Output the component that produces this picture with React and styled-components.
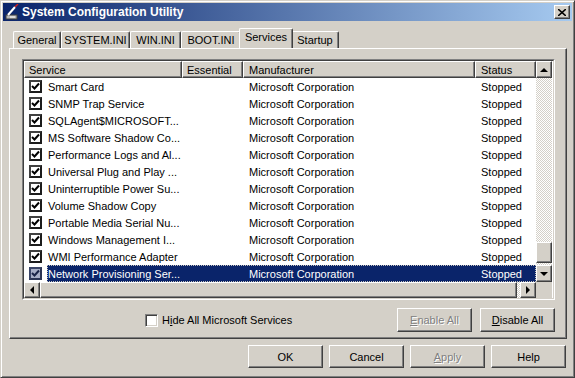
import React from 'react';
import styled, { createGlobalStyle, css } from 'styled-components';

const GlobalStyle = createGlobalStyle`
  html, body {
    margin: 0;
    padding: 0;
    background: #d4d0c8;
  }
  body {
    font-family: "Liberation Sans", Arial, sans-serif;
    font-size: 11px;
    color: #000;
  }
`;

const raised = css`
  border: 1px solid;
  border-color: #fff #404040 #404040 #fff;
  box-shadow: inset -1px -1px 0 #808080;
`;

const Window = styled.div`
  width: 575px;
  height: 378px;
  box-sizing: border-box;
  background: #d4d0c8;
  border: 1px solid;
  border-color: #d4d0c8 #404040 #404040 #d4d0c8;
  box-shadow: inset 1px 1px 0 #fff, inset -1px -1px 0 #808080;
  padding: 2px;
  display: flex;
  flex-direction: column;
`;

const TitleBar = styled.div`
  height: 18px;
  display: flex;
  align-items: center;
  gap: 2px;
  padding: 0 2px 0 1px;
  background: linear-gradient(to right, #0a246a, #a6caf0);
  color: #fff;
  font-weight: bold;
  font-size: 12px;
`;

const TitleText = styled.span`
  flex: 1;
  white-space: nowrap;
`;

const CloseButton = styled.div`
  ${raised};
  width: 16px;
  height: 14px;
  box-sizing: border-box;
  background: #d4d0c8;
  display: flex;
  align-items: center;
  justify-content: center;
`;

const Content = styled.div`
  display: flex;
  flex-direction: column;
  padding: 7px 5px 0 6px;
`;

const TabStrip = styled.div`
  display: flex;
  align-items: flex-end;
  height: 20px;
  padding-left: 4px;
`;

const Tab = styled.div`
  position: relative;
  box-sizing: border-box;
  width: ${p => p.$w}px;
  height: ${p => (p.$active ? 20 : 17)}px;
  margin: 0 ${p => (p.$active ? -2 : 0)}px;
  z-index: ${p => (p.$active ? 2 : 0)};
  background: #d4d0c8;
  border: 1px solid;
  border-bottom: none;
  border-color: #fff #404040 #fff #fff;
  border-radius: 2px 2px 0 0;
  box-shadow: inset -1px 0 0 #808080;
  display: flex;
  align-items: center;
  justify-content: center;
  padding-bottom: ${p => (p.$active ? 3 : 0)}px;
  white-space: nowrap;
`;

const Panel = styled.div`
  position: relative;
  z-index: 1;
  box-sizing: border-box;
  height: 291px;
  border: 1px solid;
  border-color: #fff #404040 #404040 #fff;
  box-shadow: inset -1px -1px 0 #808080;
  padding: 10px 11px 0 12px;
  display: flex;
  flex-direction: column;
`;

const ListFrame = styled.div`
  border: 1px solid;
  border-color: #808080 #fff #fff #808080;
`;

const ListInner = styled.div`
  border: 1px solid;
  border-color: #404040 #d4d0c8 #d4d0c8 #404040;
  background: #fff;
  display: grid;
  grid-template-columns: 512px 16px;
  grid-template-rows: 221px 16px;
`;

const Table = styled.div`
  display: flex;
  flex-direction: column;
  overflow: hidden;
`;

const HeaderRow = styled.div`
  display: flex;
  height: 17px;
`;

const HeaderCell = styled.div`
  ${raised};
  box-sizing: border-box;
  width: ${p => p.$w}px;
  background: #d4d0c8;
  padding-left: ${p => p.$pad}px;
  display: flex;
  align-items: center;
  white-space: nowrap;
  overflow: hidden;
`;

const Row = styled.div`
  display: flex;
  height: 17px;
  align-items: center;
`;

const CheckCell = styled.div`
  width: 23px;
  height: 17px;
  box-sizing: border-box;
  padding-left: 5px;
  display: flex;
  align-items: center;
`;

const ListCheck = styled.div`
  width: 13px;
  height: 13px;
  box-sizing: border-box;
  border: 2px solid;
  border-color: ${p => (p.$sel ? '#3a4568 #2a3454 #2a3454 #3a4568' : '#404040 #1c1c1c #1c1c1c #404040')};
  background: ${p => (p.$sel ? '#a7aec6' : '#fff')};
  display: flex;
  align-items: center;
  justify-content: center;
`;

const RowBody = styled.div`
  display: flex;
  height: 17px;
  box-sizing: border-box;
  align-items: center;
  background: ${p => (p.$sel ? '#0a246a' : 'transparent')};
  color: ${p => (p.$sel ? '#fff' : '#000')};
  outline: ${p => (p.$sel ? '1px dotted #c8c4bc' : 'none')};
  outline-offset: -1px;
`;

const Cell = styled.div`
  width: ${p => p.$w}px;
  box-sizing: border-box;
  padding-left: ${p => p.$pad}px;
  white-space: nowrap;
  overflow: hidden;
`;

const VScroll = styled.div`
  display: flex;
  flex-direction: column;
`;

const HScroll = styled.div`
  display: flex;
`;

const ScrollButton = styled.div`
  ${raised};
  box-sizing: border-box;
  width: ${p => (p.$vertical ? 16 : 16)}px;
  height: ${p => (p.$vertical ? 17 : 16)}px;
  flex: none;
  background: #d4d0c8;
  display: flex;
  align-items: center;
  justify-content: center;
`;

const Arrow = styled.div`
  width: 0;
  height: 0;
  ${p =>
    p.$dir === 'up' &&
    css`border-left: 4px solid transparent; border-right: 4px solid transparent; border-bottom: 4px solid #000;`}
  ${p =>
    p.$dir === 'down' &&
    css`border-left: 4px solid transparent; border-right: 4px solid transparent; border-top: 4px solid #000;`}
  ${p =>
    p.$dir === 'left' &&
    css`border-top: 4px solid transparent; border-bottom: 4px solid transparent; border-right: 4px solid #000;`}
  ${p =>
    p.$dir === 'right' &&
    css`border-top: 4px solid transparent; border-bottom: 4px solid transparent; border-left: 4px solid #000;`}
`;

const Track = styled.div`
  flex: ${p => (p.$size ? 'none' : 1)};
  ${p => (p.$vertical ? 'height' : 'width')}: ${p => (p.$size ? `${p.$size}px` : 'auto')};
  background: repeating-conic-gradient(#fff 0 25%, #d4d0c8 0 50%) 0 0 / 2px 2px;
`;

const Thumb = styled.div`
  ${raised};
  box-sizing: border-box;
  flex: ${p => (p.$size ? 'none' : 1)};
  ${p => (p.$vertical ? 'height' : 'width')}: ${p => (p.$size ? `${p.$size}px` : 'auto')};
  background: #d4d0c8;
`;

const Corner = styled.div`
  background: #d4d0c8;
`;

const OptionsRow = styled.div`
  display: flex;
  align-items: center;
  margin-top: 8px;
  height: 24px;
`;

const CheckLabel = styled.label`
  display: flex;
  align-items: center;
  gap: 4px;
  margin-left: 123px;
`;

const FormCheck = styled.span`
  width: 13px;
  height: 13px;
  box-sizing: border-box;
  background: #fff;
  border: 1px solid;
  border-color: #808080 #fff #fff #808080;
  box-shadow: inset 1px 1px 0 #404040, inset -1px -1px 0 #d4d0c8;
`;

const ButtonGroup = styled.div`
  display: flex;
  gap: ${p => p.$gap}px;
  margin-left: auto;
`;

const Button = styled.div`
  ${raised};
  box-sizing: border-box;
  width: 75px;
  height: ${p => p.$h || 23}px;
  background: #d4d0c8;
  display: flex;
  align-items: center;
  justify-content: center;
  color: ${p => (p.$disabled ? '#808080' : '#000')};
  text-shadow: ${p => (p.$disabled ? '1px 1px 0 #fff' : 'none')};
  white-space: nowrap;
`;

const DialogButtons = styled.div`
  display: flex;
  justify-content: flex-end;
  gap: 6px;
  margin-top: 6px;
  padding-right: 1px;
`;

const tabs = [
  { label: 'General', w: 48 },
  { label: 'SYSTEM.INI', w: 69 },
  { label: 'WIN.INI', w: 51 },
  { label: 'BOOT.INI', w: 60 },
  { label: 'Services', w: 54, active: true },
  { label: 'Startup', w: 48 },
];

const services = [
  'Smart Card',
  'SNMP Trap Service',
  'SQLAgent$MICROSOFT...',
  'MS Software Shadow Co...',
  'Performance Logs and Al...',
  'Universal Plug and Play ...',
  'Uninterruptible Power Su...',
  'Volume Shadow Copy',
  'Portable Media Serial Nu...',
  'Windows Management I...',
  'WMI Performance Adapter',
  'Network Provisioning Ser...',
];

const AppIcon = () => (
  <svg width="16" height="16" viewBox="0 0 16 16">
    <rect x="2" y="11" width="11" height="4" fill="#b8b8b8" stroke="#404040" strokeWidth="1" />
    <line x1="4" y1="11" x2="11" y2="3" stroke="#fff" strokeWidth="2" />
    <line x1="11" y1="3" x2="14" y2="0" stroke="#d02020" strokeWidth="1.5" />
    <line x1="6" y1="13" x2="11" y2="13" stroke="#fff" strokeWidth="1" />
  </svg>
);

const CloseGlyph = () => (
  <svg width="8" height="7" viewBox="0 0 8 7">
    <path d="M0 0 L8 7 M8 0 L0 7" stroke="#000" strokeWidth="1.6" />
  </svg>
);

const CheckMark = ({ color }) => (
  <svg width="9" height="9" viewBox="0 0 9 9">
    <path d="M1 4 L3.5 6.5 L8 1.5" fill="none" stroke={color} strokeWidth="2" />
  </svg>
);

const App = () => {
  return (
    <>
      <GlobalStyle />
      <Window>
        <TitleBar>
          <AppIcon />
          <TitleText>System Configuration Utility</TitleText>
          <CloseButton>
            <CloseGlyph />
          </CloseButton>
        </TitleBar>
        <Content>
          <TabStrip>
            {tabs.map(t => (
              <Tab key={t.label} $w={t.w} $active={t.active}>
                {t.label}
              </Tab>
            ))}
          </TabStrip>
          <Panel>
            <ListFrame>
              <ListInner>
                <Table>
                  <HeaderRow>
                    <HeaderCell $w={158} $pad={4}>Service</HeaderCell>
                    <HeaderCell $w={61} $pad={4}>Essential</HeaderCell>
                    <HeaderCell $w={232} $pad={5}>Manufacturer</HeaderCell>
                    <HeaderCell $w={61} $pad={5}>Status</HeaderCell>
                  </HeaderRow>
                  {services.map((name, i) => {
                    const sel = i === services.length - 1;
                    return (
                      <Row key={name}>
                        <CheckCell>
                          <ListCheck $sel={sel}>
                            <CheckMark color={sel ? '#1a2448' : '#000'} />
                          </ListCheck>
                        </CheckCell>
                        <RowBody $sel={sel}>
                          <Cell $w={135} $pad={1}>{name}</Cell>
                          <Cell $w={61} $pad={5}></Cell>
                          <Cell $w={232} $pad={6}>Microsoft Corporation</Cell>
                          <Cell $w={61} $pad={6}>Stopped</Cell>
                        </RowBody>
                      </Row>
                    );
                  })}
                </Table>
                <VScroll>
                  <ScrollButton $vertical>
                    <Arrow $dir="up" />
                  </ScrollButton>
                  <Track $vertical />
                  <Thumb $vertical $size={21} />
                  <Track $vertical $size={2} />
                  <ScrollButton $vertical>
                    <Arrow $dir="down" />
                  </ScrollButton>
                </VScroll>
                <HScroll>
                  <ScrollButton>
                    <Arrow $dir="left" />
                  </ScrollButton>
                  <Thumb />
                  <Track $size={3} />
                  <ScrollButton>
                    <Arrow $dir="right" />
                  </ScrollButton>
                </HScroll>
                <Corner />
              </ListInner>
            </ListFrame>
            <OptionsRow>
              <CheckLabel>
                <FormCheck />
                <span>
                  H<u>i</u>de All Microsoft Services
                </span>
              </CheckLabel>
              <ButtonGroup $gap={8}>
                <Button $h={24} $disabled>
                  <span>
                    <u>E</u>nable All
                  </span>
                </Button>
                <Button $h={24}>
                  <span>
                    <u>D</u>isable All
                  </span>
                </Button>
              </ButtonGroup>
            </OptionsRow>
          </Panel>
          <DialogButtons>
            <Button>OK</Button>
            <Button>Cancel</Button>
            <Button $disabled>
              <span>
                <u>A</u>pply
              </span>
            </Button>
            <Button>Help</Button>
          </DialogButtons>
        </Content>
      </Window>
    </>
  );
};

export default App;
